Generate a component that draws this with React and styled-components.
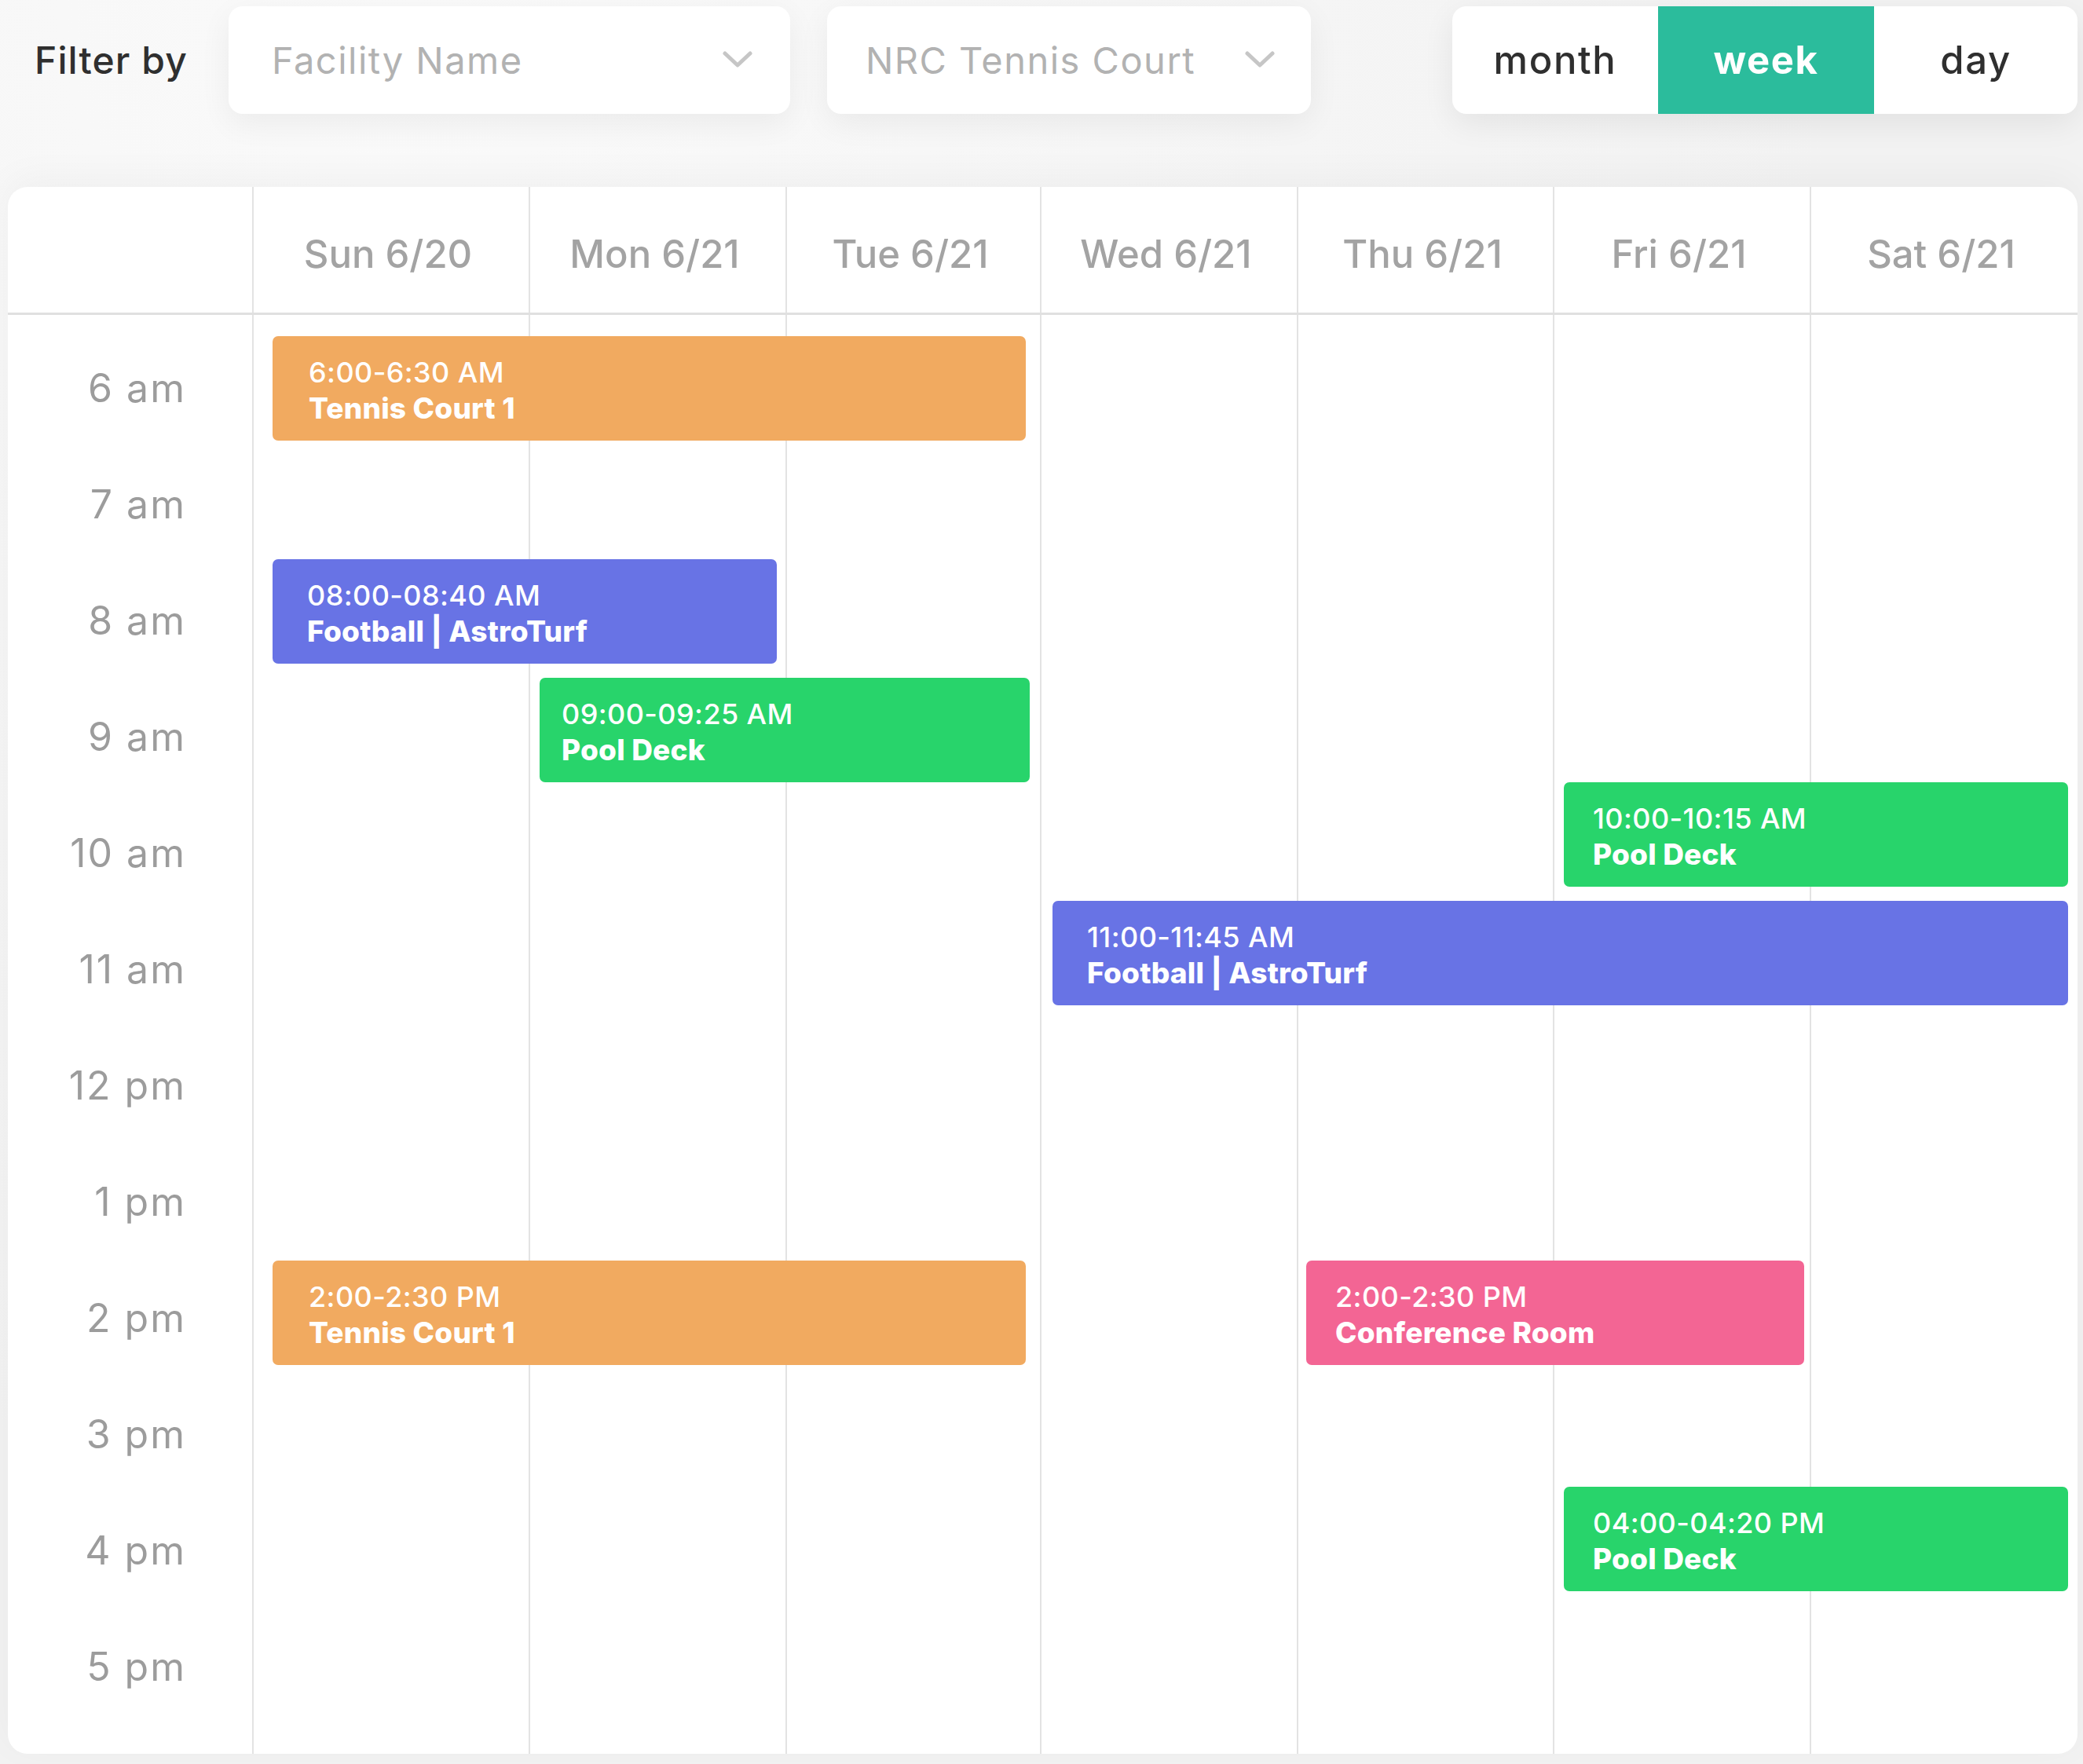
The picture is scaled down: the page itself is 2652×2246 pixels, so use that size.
import React from "react";
import styled, { createGlobalStyle } from "styled-components";

const GlobalStyle = createGlobalStyle`
  html, body {
    margin: 0;
    padding: 0;
    background: #f2f2f2;
  }
  * { box-sizing: border-box; }
  body {
    font-family: "Inter", "Noto Sans", sans-serif;
  }
`;

const COLS = [311, 352, 327, 324, 327, 326, 327, 341];
const DAY_STARTS = COLS.slice(1).reduce(
  (acc, w, i) => {
    acc.push(acc[i] + w);
    return acc;
  },
  [COLS[0]]
);

const Page = styled.div`
  width: 2652px;
  min-height: 2246px;
  padding: 7px 7px 13px 10px;
  background: radial-gradient(ellipse at 20% 0%, #fafafa 0%, #f2f2f2 60%);
`;

const TopBar = styled.div`
  display: flex;
  align-items: center;
  height: 138px;
`;

const FilterLabel = styled.span`
  margin-left: 34px;
  margin-right: 52px;
  font-size: 48px;
  font-weight: 500;
  color: #2f2f2f;
  letter-spacing: 1.1px;
`;

const Select = styled.div`
  width: ${(p) => p.$w}px;
  height: 137px;
  margin-left: ${(p) => p.$gap || 0}px;
  background: #fff;
  border-radius: 18px;
  box-shadow: 0 12px 40px rgba(0, 0, 0, 0.06);
  display: flex;
  align-items: center;
  justify-content: space-between;
  padding: 0 ${(p) => p.$pr}px 0 ${(p) => p.$pl}px;
`;

const SelectText = styled.span`
  font-size: 47px;
  color: #b2b2b2;
  font-weight: 400;
  letter-spacing: 1.5px;
`;

const Toggle = styled.div`
  margin-left: auto;
  display: flex;
  height: 137px;
  border-radius: 18px;
  overflow: hidden;
  background: #fff;
  box-shadow: 0 12px 40px rgba(0, 0, 0, 0.07);
`;

const Segment = styled.div`
  width: ${(p) => p.$w}px;
  display: flex;
  align-items: center;
  justify-content: center;
  font-size: 49px;
  font-weight: ${(p) => (p.$active ? 700 : 500)};
  color: ${(p) => (p.$active ? "#ffffff" : "#2f2f2f")};
  background: ${(p) => (p.$active ? "#2bbc9c" : "transparent")};
  letter-spacing: 1.6px;
`;

const Card = styled.div`
  margin-top: 93px;
  width: 2635px;
  background: #fff;
  border-radius: 25px;
  overflow: hidden;
  box-shadow: 0 -10px 50px rgba(0, 0, 0, 0.04);
`;

const HeaderRow = styled.div`
  display: grid;
  grid-template-columns: ${COLS.map((c) => c + "px").join(" ")};
  height: 163px;
  border-bottom: 3px solid #e0e0e0;
`;

const HeaderCell = styled.div`
  display: flex;
  align-items: center;
  justify-content: center;
  padding: 10px 8px 0 0;
  border-left: ${(p) => (p.$first ? "none" : "2px solid #e3e3e3")};
  font-size: 49px;
  font-weight: 500;
  color: #a3a3a3;
`;

const Body = styled.div`
  position: relative;
  display: grid;
  grid-template-columns: ${COLS.map((c) => c + "px").join(" ")};
  height: 1832px;
`;

const TimeColumn = styled.div`
  display: flex;
  flex-direction: column;
  padding-top: 19px;
`;

const TimeLabel = styled.div`
  height: 148px;
  display: flex;
  align-items: center;
  justify-content: flex-end;
  padding-right: 84px;
  font-size: 50px;
  font-weight: 400;
  letter-spacing: 2px;
  color: #9c9c9c;
`;

const DayColumn = styled.div`
  border-left: 2px solid #e3e3e3;
`;

const Event = styled.div`
  position: absolute;
  height: 133px;
  border-radius: 7px;
  background: ${(p) => p.$color};
  padding-top: 23px;
  padding-right: 20px;
  color: #fff;
  display: flex;
  flex-direction: column;
`;

const EventTime = styled.span`
  font-size: 36px;
  line-height: 46px;
  font-weight: 500;
  letter-spacing: 0.4px;
  white-space: nowrap;
`;

const EventTitle = styled.span`
  font-size: 37px;
  line-height: 46px;
  font-weight: 800;
  white-space: nowrap;
  letter-spacing: 0.2px;
`;

const Chevron = () => (
  <svg width="38" height="24" viewBox="0 0 38 24" fill="none">
    <path
      d="M3 4 L19 19 L35 4"
      stroke="#c6c6c6"
      strokeWidth="5"
      strokeLinecap="round"
      strokeLinejoin="round"
    />
  </svg>
);

const DAYS = [
  "Sun 6/20",
  "Mon 6/21",
  "Tue 6/21",
  "Wed 6/21",
  "Thu 6/21",
  "Fri 6/21",
  "Sat 6/21",
];

const HOURS = [
  "6 am",
  "7 am",
  "8 am",
  "9 am",
  "10 am",
  "11 am",
  "12 pm",
  "1 pm",
  "2 pm",
  "3 pm",
  "4 pm",
  "5 pm",
];

const COLORS = {
  orange: "#f1aa60",
  blue: "#6873e5",
  green: "#28d46b",
  pink: "#f36594",
};

const EVENTS = [
  { time: "6:00-6:30 AM", title: "Tennis Court 1", color: "orange", from: 0, to: 2, il: 26, ir: 18, top: 27, pl: 46 },
  { time: "08:00-08:40 AM", title: "Football | AstroTurf", color: "blue", from: 0, to: 1, il: 26, ir: 11, top: 311, pl: 44 },
  { time: "09:00-09:25 AM", title: "Pool Deck", color: "green", from: 1, to: 2, il: 14, ir: 13, top: 462, pl: 28 },
  { time: "10:00-10:15 AM", title: "Pool Deck", color: "green", from: 5, to: 6, il: 14, ir: 12, top: 595, pl: 37 },
  { time: "11:00-11:45 AM", title: "Football | AstroTurf", color: "blue", from: 3, to: 6, il: 16, ir: 12, top: 746, pl: 44 },
  { time: "2:00-2:30 PM", title: "Tennis Court 1", color: "orange", from: 0, to: 2, il: 26, ir: 18, top: 1204, pl: 46 },
  { time: "2:00-2:30 PM", title: "Conference Room", color: "pink", from: 4, to: 5, il: 12, ir: 7, top: 1204, pl: 37 },
  { time: "04:00-04:20 PM", title: "Pool Deck", color: "green", from: 5, to: 6, il: 14, ir: 12, top: 1492, pl: 37 },
];

export default function App() {
  return (
    <>
      <GlobalStyle />
      <Page>
        <TopBar>
          <FilterLabel>Filter by</FilterLabel>
          <Select $w={715} $pl={55} $pr={48}>
            <SelectText>Facility Name</SelectText>
            <Chevron />
          </Select>
          <Select $w={616} $gap={47} $pl={49} $pr={46}>
            <SelectText>NRC Tennis Court</SelectText>
            <Chevron />
          </Select>
          <Toggle>
            <Segment $w={262}>month</Segment>
            <Segment $w={275} $active>
              week
            </Segment>
            <Segment $w={259}>day</Segment>
          </Toggle>
        </TopBar>

        <Card>
          <HeaderRow>
            <HeaderCell $first />
            {DAYS.map((d) => (
              <HeaderCell key={d}>{d}</HeaderCell>
            ))}
          </HeaderRow>
          <Body>
            <TimeColumn>
              {HOURS.map((h) => (
                <TimeLabel key={h}>{h}</TimeLabel>
              ))}
            </TimeColumn>
            {DAYS.map((d) => (
              <DayColumn key={d} />
            ))}
            {EVENTS.map((e, i) => {
              const left = DAY_STARTS[e.from] + e.il;
              const right = DAY_STARTS[e.to + 1] - e.ir;
              return (
                <Event
                  key={i}
                  $color={COLORS[e.color]}
                  style={{ left, width: right - left, top: e.top, paddingLeft: e.pl }}
                >
                  <EventTime>{e.time}</EventTime>
                  <EventTitle>{e.title}</EventTitle>
                </Event>
              );
            })}
          </Body>
        </Card>
      </Page>
    </>
  );
}
